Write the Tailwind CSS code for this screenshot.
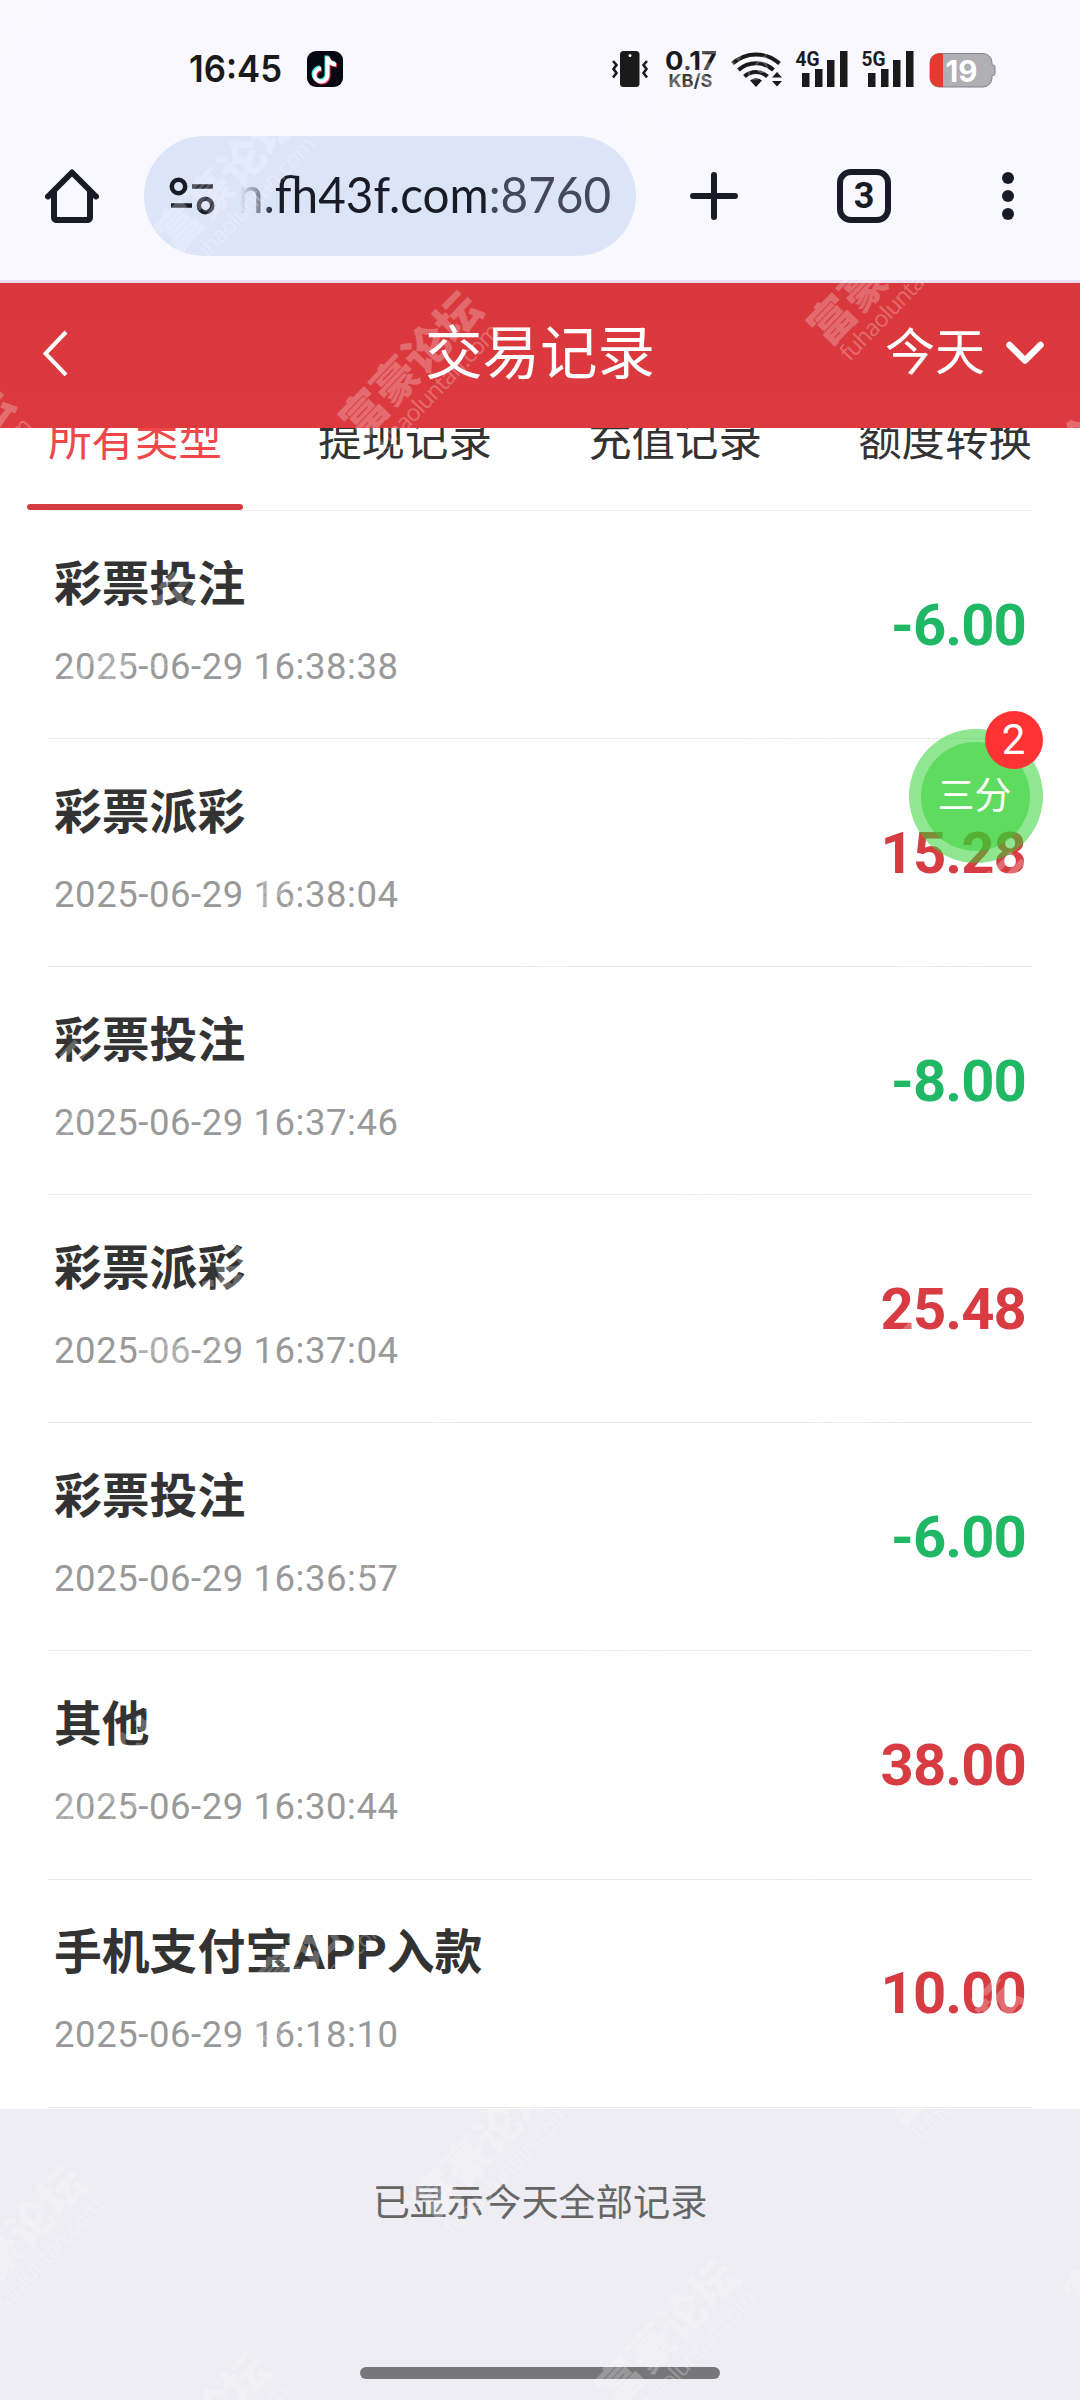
<!DOCTYPE html>
<html lang="zh-CN">
<head>
<meta charset="utf-8">
<title>交易记录</title>
<script src="https://cdn.jsdelivr.net/npm/@tailwindcss/browser@4"></script>
</head>
<body class="bg-[#eeedf3]">
<div class="relative flex h-[2400px] w-[1080px] flex-col overflow-hidden bg-[#eeedf3] font-[Roboto,'Noto_Sans_CJK_SC',sans-serif]">

  <!-- Status bar -->
  <div class="flex h-[136px] shrink-0 items-center justify-between bg-[#f9f8fe] pt-[2px] pr-[84px] pl-[190px]">
    <div class="flex items-center gap-[25px]">
      <svg width="92" height="36" class="overflow-visible"><text x="-1" y="31" textLength="93" lengthAdjust="spacingAndGlyphs" font-family="Inter" font-weight="600" font-size="37" fill="#1a1a1a">16:45</text></svg>
      <svg width="36" height="36" viewBox="0 0 36 36">
        <rect width="36" height="36" rx="9" fill="#080812"/>
        <g fill="none" stroke-width="4">
          <path d="M19.500 4.500v19a6.500 6.500 0 1 1-6.500-7M19.500 5c1 5 4 7 8.500 7.500" stroke="#25f4ee"/>
          <path d="M21.500 6.500v19a6.500 6.500 0 1 1-6.500-7M21.500 7c1 5 4 7 8.500 7.500" stroke="#fe2c55"/>
          <path d="M20.500 5.500v19a6.500 6.500 0 1 1-6.500-7M20.500 6c1 5 4 7 8.500 7.500" stroke="#fff"/>
        </g>
      </svg>
    </div>
    <svg width="384" height="36" viewBox="612 51 384 36" class="overflow-visible" fill="#1a1a1a">
      <!-- vibrate -->
      <rect x="620" y="51" width="19.500" height="36" rx="3.500"/><circle cx="630" cy="55.500" r="1.500" fill="#fff"/>
      <path d="M613 61l3.500 4-3 4 3 4-3.500 4.500M647 61l-3.500 4 3 4-3 4 3.500 4.500" fill="none" stroke="#1a1a1a" stroke-width="2.600"/>
      <!-- network speed -->
      <text x="665" y="70" textLength="52" lengthAdjust="spacingAndGlyphs" font-family="Inter" font-weight="700" font-size="26">0.17</text>
      <text x="668.500" y="87" textLength="44" lengthAdjust="spacingAndGlyphs" font-family="Inter" font-weight="700" font-size="18" fill="#3a3a3a">KB/S</text>
      <!-- wifi -->
      <g fill="none" stroke="#1a1a1a" stroke-width="4">
        <path d="M732.500 63.500a35 35 0 0 1 47 0M738.500 70a26 26 0 0 1 35 0M744.500 76.500a17 17 0 0 1 23 0"/>
      </g>
      <path d="M756 87l-6-6.500q6-5 12 0zM777 72l5 5.500h-10zM777 86.500l5-5.500h-10z"/>
      <!-- signals -->
      <text x="795.500" y="66" textLength="24" lengthAdjust="spacingAndGlyphs" font-family="Roboto" font-weight="700" font-size="21">4G</text>
      <path d="M802 73h7.500v14h-7.500zM815 69h7.500v18h-7.500zM827 60h7.500v27h-7.500zM840 51h7.500v36h-7.500z"/>
      <text x="861.500" y="66" textLength="24" lengthAdjust="spacingAndGlyphs" font-family="Roboto" font-weight="700" font-size="21">5G</text>
      <path d="M868 73h7.500v14h-7.500zM881 69h7.500v18h-7.500zM893 60h7.500v27h-7.500zM906 51h7.500v36h-7.500z"/>
      <!-- battery -->
      <path d="M939 53.500h44a9 9 0 0 1 9 9v2.500h1a2 2 0 0 1 2 2v6.500a2 2 0 0 1-2 2h-1v2.500a9 9 0 0 1-9 9h-44a9 9 0 0 1-9-9v-15.500a9 9 0 0 1 9-9z" fill="#b0afb4" stroke="#838287"/>
      <path d="M943 53.500h-4a9 9 0 0 0-9 9v15.500a9 9 0 0 0 9 9h4z" fill="#e8392d"/>
      <text x="945.500" y="81.500" textLength="32" lengthAdjust="spacingAndGlyphs" font-family="Inter" font-weight="700" font-size="30" fill="#fff">19</text>
    </svg>
  </div>

  <!-- Browser toolbar -->
  <div class="flex h-[147px] shrink-0 items-start border-b-[3px] border-[#eadff0] bg-[#f9f8fe] text-[#191b26]">
    <div class="flex h-[120px] w-[144px] items-center justify-center">
      <svg width="54" height="54" fill="none" stroke="#191b26" stroke-width="6" stroke-linejoin="round" stroke-linecap="round"><path d="M3 27.500L27 3.500l24 24M9 23v25.500a2.500 2.500 0 0 0 2.500 2.500h31a2.500 2.500 0 0 0 2.500-2.500V23"/></svg>
    </div>
    <div class="flex h-[120px] w-[492px] items-center rounded-full bg-[#dce4f8] pl-[25px]">
      <svg width="46" height="40" fill="none" stroke="#191b26" stroke-width="4.500"><circle cx="9.500" cy="10.500" r="6.700"/><path d="M23 10.500h21M2 29.500h21"/><circle cx="36.500" cy="29.500" r="6.700"/></svg>
      <svg width="372" height="60" class="ml-[25px] overflow-visible">
        <defs><linearGradient id="fade" gradientUnits="userSpaceOnUse" x1="0" x2="34" y1="0" y2="0"><stop offset="0" stop-color="#191b26" stop-opacity="0"/><stop offset=".6" stop-color="#191b26" stop-opacity=".5"/><stop offset="1" stop-color="#191b26"/></linearGradient></defs>
        <text x="-3" y="47" textLength="374" lengthAdjust="spacingAndGlyphs" font-family="Lato" font-size="49.500" fill="url(#fade)">n.fh43f.com<tspan fill="#444858">:8760</tspan></text>
      </svg>
    </div>
    <div class="flex h-[120px] flex-1 items-center pl-[54px]">
      <svg width="48" height="48" stroke="#191b26" stroke-width="6" stroke-linecap="round"><path d="M24 3v42M3 24h42"/></svg>
      <div class="ml-[99px] flex size-[54px] items-center justify-center rounded-[14px] border-6 border-[#191b26] font-[Roboto] text-[36px] leading-none font-bold">3</div>
      <svg width="12" height="48" class="ml-[111px]" fill="#191b26"><circle cx="6" cy="6" r="6"/><circle cx="6" cy="24" r="6"/><circle cx="6" cy="42" r="6"/></svg>
    </div>
  </div>

  <!-- Page header -->
  <header class="grid h-[145px] shrink-0 grid-cols-3 items-center bg-linear-to-b from-[#d8373b] to-[#dd3a3f] pr-[36px] pb-[5px] pl-[43px] text-white">
    <svg width="26" height="46" fill="none" stroke="#fff" stroke-width="4"><path d="M23 2L2.500 23.500 23 45"/></svg>
    <h1 class="-ml-[7px] pt-[3px] text-center text-[57.500px] leading-none whitespace-nowrap">交易记录</h1>
    <div class="flex items-center justify-end gap-[21px] text-[50px] leading-none">今天<svg width="38" height="24" fill="none" stroke="#fff" stroke-width="6.500" stroke-linecap="round" stroke-linejoin="round"><path d="M3.500 4L19 19.500 34.500 4"/></svg></div>
  </header>

  <!-- Tabs, partly scrolled below the header -->
  <nav class="h-[82px] shrink-0 overflow-hidden bg-white">
    <div class="-mt-[18px] grid h-[100px] grid-cols-4 text-center text-[43.400px] text-[#333]">
      <div class="flex flex-col items-center justify-between pt-[10px] leading-[44px] text-[#f04848]">所有类型<span class="h-[6px] w-[216px] rounded-full bg-[#d43c42]"></span></div>
      <div class="pt-[10px] leading-[44px]">提现记录</div>
      <div class="pt-[10px] leading-[44px]">充值记录</div>
      <div class="pt-[10px] leading-[44px]">额度转换</div>
    </div>
  </nav>

  <!-- Records -->
  <main id="list" class="h-[1599px] shrink-0 bg-white px-[48px]"></main>

  <footer class="flex flex-1 flex-col items-center justify-between bg-[#eeedf3] pt-[72px] pb-[21px]">
    <p class="text-[37.200px] leading-[44px] text-[#666]">已显示今天全部记录</p>
    <span class="h-[12px] w-[360px] rounded-full bg-[#777779]"></span>
  </footer>

  <!-- Floating bubble -->
  <div class="absolute top-[729px] left-[908.500px] flex size-[134px] items-center justify-center rounded-full bg-[rgba(49,209,51,0.54)]">
    <div class="flex size-[109px] items-center justify-center rounded-full bg-[rgba(49,209,51,0.52)] pr-[2px] text-[37px] leading-none font-normal text-white">三分</div>
    <div class="absolute -top-[18px] right-0 flex size-[58px] items-center justify-center rounded-full bg-[#ff3333] text-[42px] leading-none text-white">2</div>
  </div>

  <!-- Watermark layer -->
  <svg id="wm" class="pointer-events-none absolute inset-0" width="1080" height="2400" fill="#fff" text-anchor="middle"></svg>
</div>

<script>
const rows = [
  ['彩票投注', '2025-06-29 16:38:38', '-6.00'],
  ['彩票派彩', '2025-06-29 16:38:04', '15.28'],
  ['彩票投注', '2025-06-29 16:37:46', '-8.00'],
  ['彩票派彩', '2025-06-29 16:37:04', '25.48'],
  ['彩票投注', '2025-06-29 16:36:57', '-6.00'],
  ['其他', '2025-06-29 16:30:44', '38.00'],
  ['手机支付宝APP入款', '2025-06-29 16:18:10', '10.00']
];
document.getElementById('list').innerHTML =
  '<div class="h-px bg-[#ececec]"></div>' + rows.map(([t, d, a]) => `
  <div class="flex h-[228.100px] items-center justify-between border-b border-[#e9e9ea] pr-[6px] pl-[6px]">
    <div class="flex flex-col gap-[36px] pb-[2px]">
      <div class="text-[47.800px] leading-[50px] font-bold text-[#333]">${t}</div>
      <div class="text-[36.500px] leading-[42px] tracking-[0.55px] text-[#999]">${d}</div>
    </div>
    <div class="text-[58px] leading-none font-bold tracking-[-0.9px] ${a[0] === '-' ? 'text-[#21b865]' : 'text-[#d73c42]'}">${a}</div>
  </div>`).join('');

let marks = '';
for (let i = -6; i <= 4; i++) for (let j = -4; j <= 14; j++) {
  const x = 412 + 468 * i + 184.5 * j, y = 366 - 94 * i + 187.25 * j;
  if (x < -120 || x > 1200 || y < -120 || y > 2520) continue;
  marks += `<g transform="translate(${x} ${y}) rotate(-46)" opacity=".25"><text y="15" font-family="Noto Sans CJK SC" font-weight="900" font-size="45">富豪论坛</text><text y="41" font-family="Open Sans" font-size="23" font-weight="500" textLength="172">fuhaoluntan.com</text></g>`;
}
document.getElementById('wm').innerHTML = marks;
</script>
</body>
</html>
